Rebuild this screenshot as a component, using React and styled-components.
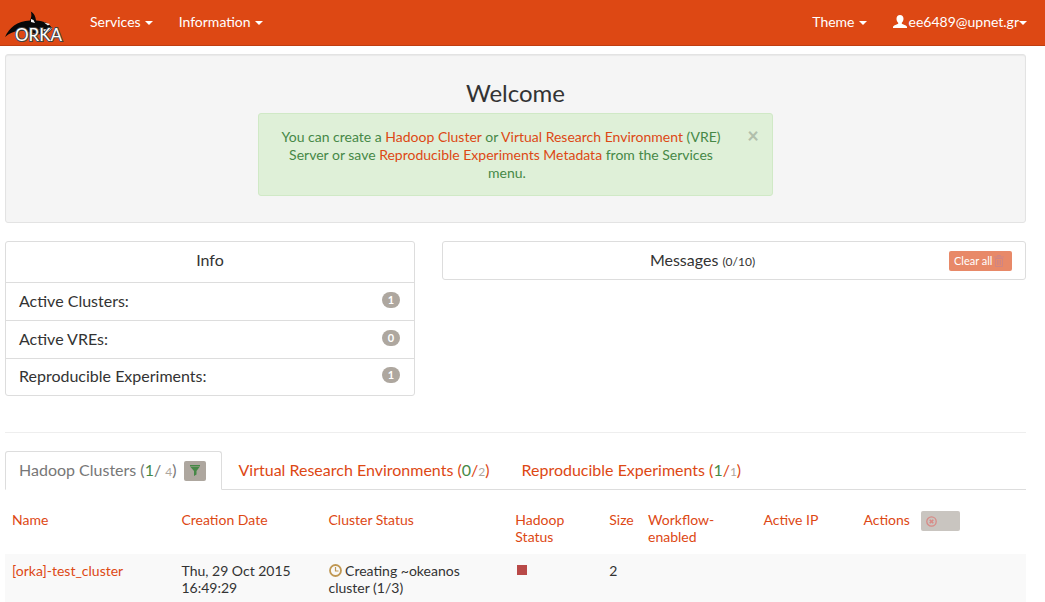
import React from "react";
import styled, { createGlobalStyle } from "styled-components";

const Global = createGlobalStyle`
  * { box-sizing: border-box; }
  body {
    margin: 0;
    background: #fff;
    color: #333;
    font: 400 14px/18px Lato, "Open Sans", sans-serif;
    overflow-x: hidden;
  }
  html { scrollbar-width: none; }
  a { color: #dd4814; text-decoration: none; }
  button { font-family: inherit; cursor: pointer; }
`;

const Navbar = styled.nav`
  display: flex;
  justify-content: space-between;
  height: 46px;
  background: #dd4814;
  border-bottom: 1px solid #bf3e11;
`;

const NavGroup = styled.div`
  display: flex;
`;

const Brand = styled.a`
  display: flex;
  align-items: flex-end;
  width: 76px;
  padding: 0 0 0 4px;
`;

const NavButton = styled.button`
  display: flex;
  align-items: center;
  gap: ${(p) => (p.$tight ? 0 : 4)}px;
  height: 43px;
  padding: 0 12px 0 14px;
  border: 0;
  background: transparent;
  color: #fff;
  font-size: 14px;
`;

const UserButton = styled(NavButton)`
  padding-right: 18px;
  svg { margin-right: 2px; }
`;

const Caret = styled.span`
  border: 4px solid transparent;
  border-top-color: #fff;
  border-bottom: 0;
  margin-top: 2px;
`;

const Main = styled.main`
  padding: 8px 19px 0 5px;
`;

const Well = styled.section`
  padding: 24px 0 26px;
  border: 1px solid #e3e3e3;
  border-radius: 3px;
  background: #f5f5f5;
  box-shadow: inset 0 1px 1px rgba(0, 0, 0, 0.05);
`;

const Title = styled.h1`
  margin: 0 0 6px;
  font-size: 24px;
  line-height: 28px;
  font-weight: 400;
  text-align: center;
`;

const Alert = styled.div`
  width: 515px;
  max-width: 100%;
  margin: 0 auto;
  padding: 14px 31px 13px 14px;
  border: 1px solid #d0e9c6;
  border-radius: 3px;
  background: #dff0d8;
  color: #468847;
  text-align: center;
`;

const Close = styled.button`
  float: right;
  width: 12px;
  height: 20px;
  margin: 0 -18px 0 18px;
  padding: 0 0 6px;
  border: 0;
  background: transparent;
  color: #000;
  font-size: 20px;
  font-weight: 900;
  line-height: 14px;
  opacity: 0.2;
`;

const Columns = styled.div`
  display: grid;
  grid-template-columns: 410fr 584fr;
  gap: 27px;
  align-items: start;
  margin-top: 18px;
`;

const Panel = styled.section`
  border: 1px solid #ddd;
  border-radius: 3px;
`;

const PanelTitle = styled.h2`
  margin: 0;
  font-size: 16px;
  line-height: 36px;
  height: 40px;
  font-weight: 400;
  text-align: center;
`;

const InfoRow = styled.div`
  display: flex;
  justify-content: space-between;
  align-items: center;
  height: 38px;
  padding: 0 14px 2px 13px;
  border-top: 1px solid #ddd;
  font-size: 16px;
  &:last-child { height: 37px; }
`;

const Badge = styled.span`
  min-width: 18px;
  border-radius: 9px;
  margin-bottom: 2px;
  background: #aea79f;
  color: #fff;
  font-size: 11px;
  line-height: 16px;
  font-weight: 700;
  text-align: center;
`;

const MessageHeader = styled.header`
  display: flex;
  align-items: center;
  height: 37px;
  padding: 0 13px;
`;

const MessageTitle = styled.h2`
  flex: 1;
  margin: 0;
  font-size: 16px;
  line-height: 24px;
  font-weight: 400;
  text-align: center;
  small { font-size: 12px; }
`;

const ClearButton = styled.button`
  display: flex;
  align-items: center;
  gap: 2px;
  width: 63px;
  height: 20px;
  padding: 0 5px;
  border: 0;
  border-radius: 2px;
  background: #e88968;
  color: #fff;
  font-size: 11px;
  white-space: nowrap;
`;

const Divider = styled.hr`
  height: 1px;
  margin: 36px 0 18px;
  border: 0;
  background: #eee;
`;

const Tabs = styled.div`
  display: flex;
  gap: 2px;
  border-bottom: 1px solid #ddd;
`;

const Tab = styled.div`
  display: flex;
  align-items: center;
  gap: 8px;
  height: 39px;
  margin-bottom: -1px;
  padding: 0 15px 0 13px;
  border: 1px solid ${(p) => (p.$active ? "#ddd" : "transparent")};
  border-bottom-color: ${(p) => (p.$active ? "#fff" : "transparent")};
  border-radius: 3px 3px 0 0;
  font-size: 16px;
  white-space: nowrap;
  a { color: ${(p) => (p.$active ? "#777" : "#dd4814")}; }
`;

const Active = styled.span`
  color: #468847;
`;

const Total = styled.small`
  color: #aea79f;
  font-size: 12px;
`;

const FilterButton = styled.button`
  display: flex;
  align-items: center;
  justify-content: center;
  width: 22px;
  height: 20px;
  padding: 0;
  border: 0;
  border-radius: 2px;
  background: #aea79f;
`;

const Table = styled.table`
  width: 100%;
  margin-top: 13px;
  border-collapse: collapse;
  table-layout: fixed;
  line-height: 17px;
`;

const HeadCell = styled.th`
  width: ${(p) => p.$w};
  padding: 8px 7px 9px;
  color: #dd4814;
  font-weight: 400;
  text-align: left;
  vertical-align: top;
`;

const Cell = styled.td`
  padding: 8px 7px;
  background: #f9f9f9;
  vertical-align: top;
  svg { vertical-align: -1px; }
`;

const ActionsHead = styled.div`
  display: flex;
  gap: 11px;
  align-items: flex-start;
`;

const CancelButton = styled.button`
  width: 39px;
  height: 20px;
  padding: 4px 5px;
  border: 0;
  border-radius: 2px;
  background: #c9c5c0;
  svg { display: block; }
`;

const OrcaLogo = () => (
  <svg width="62" height="36" viewBox="0 0 62 36" role="img" aria-label="ORKA">
    <path d="M1 28C5 19 13 12 26 11.500c1.500-3 1.800-6 .8-9C30 4 31.500 7 32 11.500c8 .5 14 3 16 8-1 3.500-6 6-13 5.500-9-.5-13-4-20-3C10 22.500 5 24 1 28z" fill="#080808" />
    <path d="M27 10l2.500 1 1.500 3-4-1zM40 13.500l6 1.500-2 1.500zM29 19c5 2 13 2 19-.5-1 4-6 6.500-11 6.500-3-2-6-3-8-6z" fill="#f4f4f4" />
    <path d="M33 20c4 0 7 1 9 4l-6 2z" fill="#080808" />
    <text x="11" y="32" fontFamily="Lato, sans-serif" fontSize="17" fill="#fff" stroke="#444" strokeWidth="2" paintOrder="stroke">ORKA</text>
  </svg>
);

const UserIcon = () => (
  <svg width="14" height="14" viewBox="0 0 14 14" fill="#fff" aria-hidden="true">
    <path d="M7 0c2.200 0 3.500 1.500 3.500 3.700 0 1.700-.7 3.200-1.700 4v1l4 1.700c.8.400 1.200.9 1.200 1.600v1H0v-1c0-.7.400-1.200 1.200-1.600l4-1.700v-1c-1-.8-1.700-2.300-1.700-4C3.500 1.500 4.800 0 7 0z" />
  </svg>
);

const FunnelIcon = () => (
  <svg width="10" height="11" viewBox="0 0 10 11" fill="#468847" aria-hidden="true">
    <path d="M0 0h10v1.400H0zM.5 2h9L6.500 6v3.500L4 11V6z" />
  </svg>
);

const TrashIcon = () => (
  <svg width="10" height="12" viewBox="0 0 10 12" fill="none" stroke="#cf8583" aria-hidden="true">
    <path d="M3.500 1.500v-1h3v1M0 2h10M1.500 3.500h7v8h-7zM3.500 5v5M5 5v5M6.500 5v5" />
  </svg>
);

const ClockIcon = () => (
  <svg width="13" height="13" viewBox="0 0 13 13" fill="none" stroke="#c09853" aria-hidden="true">
    <circle cx="6.500" cy="6.500" r="5.500" strokeWidth="1.800" />
    <path d="M6.500 3v4h3" strokeWidth="1.200" />
  </svg>
);

const CancelIcon = () => (
  <svg width="11" height="11" viewBox="0 0 11 11" fill="none" stroke="#d88a86" aria-hidden="true">
    <circle cx="5.500" cy="5.500" r="4.700" strokeWidth="1.300" />
    <path d="M3.700 3.700l3.600 3.600M7.300 3.700L3.700 7.300" strokeWidth="1.600" />
  </svg>
);

const StopIcon = () => (
  <svg width="14" height="12" viewBox="0 0 14 12" role="img" aria-label="Stopped">
    <rect x="2" y="0" width="10" height="10" fill="#b94a48" />
  </svg>
);

const stats = [
  ["Active Clusters:", 1],
  ["Active VREs:", 0],
  ["Reproducible Experiments:", 1],
];

const columns = [
  ["Name", "16.6%"],
  ["Creation Date", "14.4%"],
  ["Cluster Status", "18.3%"],
  ["Hadoop Status", "9.2%"],
  ["Size", "3.8%"],
  ["Workflow-enabled", "11.3%"],
  ["Active IP", "9.8%"],
];

export default function App() {
  return (
    <>
      <Global />
      <Navbar>
        <NavGroup>
          <Brand href="#"><OrcaLogo /></Brand>
          <NavButton>Services <Caret /></NavButton>
          <NavButton>Information <Caret /></NavButton>
        </NavGroup>
        <NavGroup>
          <NavButton>Theme <Caret /></NavButton>
          <UserButton $tight><UserIcon />ee6489@upnet.gr<Caret /></UserButton>
        </NavGroup>
      </Navbar>
      <Main>
        <Well>
          <Title>Welcome</Title>
          <Alert>
            <Close aria-label="Close">×</Close>
            You can create a <a href="#">Hadoop Cluster</a> or{" "}
            <a href="#">Virtual Research Environment</a> (VRE) Server or save{" "}
            <a href="#">Reproducible Experiments Metadata</a> from the Services menu.
          </Alert>
        </Well>
        <Columns>
          <Panel>
            <PanelTitle>Info</PanelTitle>
            {stats.map(([label, count]) => (
              <InfoRow key={label}>{label}<Badge>{count}</Badge></InfoRow>
            ))}
          </Panel>
          <Panel>
            <MessageHeader>
              <MessageTitle>Messages <small>(0/10)</small></MessageTitle>
              <ClearButton>Clear all<TrashIcon /></ClearButton>
            </MessageHeader>
          </Panel>
        </Columns>
        <Divider />
        <Tabs>
          <Tab $active>
            <a href="#">Hadoop Clusters (<Active>1</Active>/ <Total>4</Total>)</a>
            <FilterButton aria-label="Filter"><FunnelIcon /></FilterButton>
          </Tab>
          <Tab>
            <a href="#">Virtual Research Environments (<Active>0</Active>/<Total>2</Total>)</a>
          </Tab>
          <Tab>
            <a href="#">Reproducible Experiments (<Active>1</Active>/<Total>1</Total>)</a>
          </Tab>
        </Tabs>
        <Table>
          <thead>
            <tr>
              {columns.map(([name, width]) => (
                <HeadCell key={name} $w={width}>{name}</HeadCell>
              ))}
              <HeadCell>
                <ActionsHead>Actions<CancelButton aria-label="Cancel"><CancelIcon /></CancelButton></ActionsHead>
              </HeadCell>
            </tr>
          </thead>
          <tbody>
            <tr>
              <Cell><a href="#">[orka]-test_cluster</a></Cell>
              <Cell>Thu, 29 Oct 2015 16:49:29</Cell>
              <Cell><ClockIcon /> Creating ~okeanos cluster (1/3)</Cell>
              <Cell><StopIcon /></Cell>
              <Cell>2</Cell>
              <Cell />
              <Cell />
              <Cell />
            </tr>
          </tbody>
        </Table>
      </Main>
    </>
  );
}
